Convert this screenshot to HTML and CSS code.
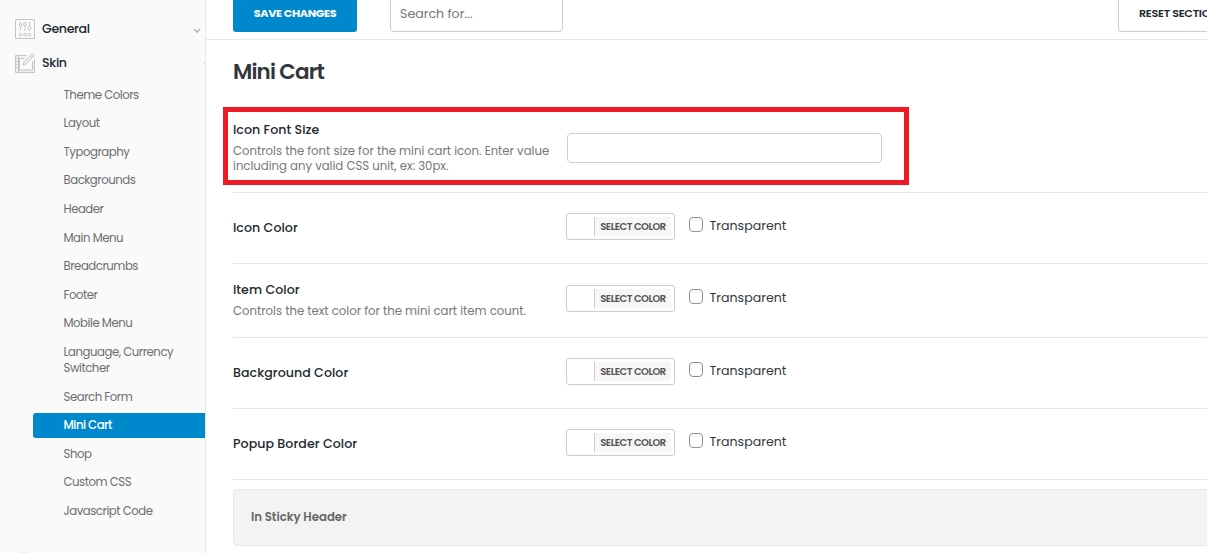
FILE: index.html
```html
<!DOCTYPE html>
<html lang="en">
<head>
<meta charset="utf-8">
<title>Theme Options</title>
<link rel="stylesheet" href="styles.css">
</head>
<body>
<div class="app">
  <aside class="sidebar">
    <div class="group general">
      <svg class="group-icon" width="20" height="20" viewBox="0 0 20 20"><rect x=".5" y=".5" width="19" height="19" rx=".5"/><path d="M5.500 3v1.500M5.500 8v3.500M10 3v1M10 7v5M14.500 3v5M14.500 11v1"/><circle cx="5.500" cy="6.200" r="1.500"/><circle cx="10" cy="5.200" r="1.500"/><circle cx="14.500" cy="9" r="1.500"/><circle cx="5.500" cy="15.700" r="1.400"/><circle cx="10" cy="15.700" r="1.400"/><circle cx="14.500" cy="15.700" r="1.400"/></svg>
      <span class="group-name">General</span>
      <svg class="chevron" width="8" height="6" viewBox="0 0 8 6"><path d="M1 1l3 3 3-3"/></svg>
    </div>
    <div class="group skin">
      <svg class="group-icon" width="20" height="20" viewBox="0 0 20 20"><path class="tint" d="M.5 2.500h11l-2 2h-5v12.500h13v-9l2-2v13.500H.5z"/><path d="M11.500 2.500H.5v17h19V6M3.500 3v16M1 5.500h1.500M1 8.500h1.500M1 11.500h1.500M1 14.500h1.500M9.500 5.500H4.500v11.500h13V8.500"/><path class="pencil" d="M8 12l1-3.200L17.300.5l2 2L11 10.800zM15.300 2.500l2 2"/></svg>
      <span class="group-name">Skin</span>
      <i class="edge-dot"></i>
    </div>
    <ul class="menu">
      <li>Theme Colors</li>
      <li>Layout</li>
      <li>Typography</li>
      <li>Backgrounds</li>
      <li>Header</li>
      <li>Main Menu</li>
      <li>Breadcrumbs</li>
      <li>Footer</li>
      <li>Mobile Menu</li>
      <li>Language, Currency<br>Switcher</li>
      <li>Search Form</li>
      <li class="active">Mini Cart</li>
      <li>Shop</li>
      <li>Custom CSS</li>
      <li>Javascript Code</li>
    </ul>
    <i class="next-icon"></i>
  </aside>
  <main class="main">
    <header class="toolbar">
      <button class="save">SAVE CHANGES</button>
      <input class="search" type="text" placeholder="Search for...">
      <button class="reset">RESET SECTION</button>
    </header>
    <section class="panel">
      <h2>Mini Cart</h2>
      <div class="row row-size">
        <div class="label"><h3>Icon Font Size</h3><p>Controls the font size for the mini cart icon. Enter value<br>including any valid CSS unit, ex: 30px.</p></div>
        <input class="size-input" type="text">
        <div class="highlight"></div>
      </div>
      <div class="row row-color">
        <div class="label"><h3>Icon Color</h3></div>
        <div class="field"><button class="picker"><span>SELECT COLOR</span></button><label><i class="check"></i>Transparent</label></div>
      </div>
      <div class="row row-item">
        <div class="label"><h3>Item Color</h3><p>Controls the text color for the mini cart item count.</p></div>
        <div class="field"><button class="picker"><span>SELECT COLOR</span></button><label><i class="check"></i>Transparent</label></div>
      </div>
      <div class="row row-color">
        <div class="label"><h3>Background Color</h3></div>
        <div class="field"><button class="picker"><span>SELECT COLOR</span></button><label><i class="check"></i>Transparent</label></div>
      </div>
      <div class="row row-color">
        <div class="label"><h3>Popup Border Color</h3></div>
        <div class="field"><button class="picker"><span>SELECT COLOR</span></button><label><i class="check"></i>Transparent</label></div>
      </div>
      <div class="section-bar">In Sticky Header</div>
    </section>
  </main>
</div>
</body>
</html>
```

FILE: styles.css
```css
* { box-sizing: border-box; }
body { margin: 0; background: #fff; color: #23282d; font-family: Poppins, Inter, sans-serif; }
h2, h3, p, ul { margin: 0; padding: 0; }
button, input { font-family: inherit; margin: 0; }
.app { display: flex; width: 1207px; height: 553px; overflow: hidden; }
.sidebar { flex: none; display: flex; flex-direction: column; width: 206px; height: 553px; background: #fafafa; border-right: 1px solid #e7e7e7; }
.group { flex: none; display: flex; align-items: center; height: 34px; padding-left: 15px; }
.general { margin-top: 12px; }
.group-icon { overflow: visible; fill: none; stroke: #c4c4c4; stroke-width: 1; }
.group-icon .tint { fill: #efefef; stroke: none; }
.group-icon .pencil { fill: #f4f4f4; }
.group-name { margin-left: 7px; font-size: 12.600px; font-weight: 500; letter-spacing: -.35px; color: #23282d; }
.chevron { margin: 4px 4px 0 auto; fill: none; stroke: #b8bcc0; stroke-width: 1.700; }
.edge-dot { width: 1px; height: 1px; margin-left: auto; background: #e0c8a8; }
.menu { flex: none; margin-top: 2.100px; padding-left: 33px; list-style: none; font-size: 11.700px; line-height: 16px; letter-spacing: -.46px; color: #6d6d6d; }
.menu li { padding: 4.500px 0 4.500px 30.500px; margin-bottom: 3.600px; }
.menu .active { background: #0088cc; color: #fff; font-weight: 500; letter-spacing: -.5px; border-radius: 3px 0 0 3px; }
.next-icon { width: 4px; height: 2px; margin: auto 0 0 22px; background: #e6e6e6; border-radius: 2px 2px 0 0; }
.main { flex: 1; min-width: 0; }
.toolbar { display: flex; align-items: flex-end; height: 40px; padding: 0 0 7px 27px; border-bottom: 1px solid #e7e7e7; }
.save { flex: none; width: 124px; height: 38px; padding: 0; border: 0; border-radius: 3px; background: #0088cc; color: #fff; font-size: 11.200px; font-weight: 700; letter-spacing: -.35px; }
.search { flex: none; width: 173px; height: 38px; margin-left: 33px; padding: 2px 9px 0; border: 1px solid #ccc; border-radius: 4px; font-size: 12.600px; }
.search::placeholder { color: #757575; opacity: 1; }
.reset { flex: none; width: 130px; height: 38px; margin-left: 555px; padding: 0 0 0 20px; text-align: left; border: 1px solid #ccc; border-radius: 3px; background: #fff; color: #23282d; font-size: 11.200px; font-weight: 600; letter-spacing: -.3px; }
.panel { padding-left: 27px; }
h2 { height: 67px; padding-top: 16px; font-size: 21.500px; line-height: 32px; font-weight: 600; letter-spacing: -.85px; color: #32373c; }
h3 { font-size: 12.600px; line-height: 18px; font-weight: 500; letter-spacing: .05px; }
p { font-size: 11.700px; line-height: 15px; color: #777; }
.row { position: relative; display: flex; border-bottom: 1px solid #e7e7e7; }
.label { flex: none; width: 333px; white-space: nowrap; }
.row-size { height: 86px; padding-top: 13px; }
.row-size h3 { margin-top: 1px; }
.row-size p { margin-top: 5px; }
.size-input { width: 315px; height: 30px; margin: 13px 0 0 1px; border: 1px solid #ccc; border-radius: 4px; }
.highlight { position: absolute; left: -10px; top: 0; width: 686px; height: 78px; border: 5px solid #ed1c24; }
.row-color { height: 71px; }
.row-color h3 { padding-top: 26px; }
.row-color .field { padding-top: 20px; }
.row-item { height: 74px; }
.row-item h3 { margin-top: 17px; }
.row-item p { margin-top: 5px; }
.row-item .field { padding-top: 21px; }
.field { display: flex; align-items: flex-start; }
.picker { display: flex; justify-content: flex-end; width: 109px; height: 27px; padding: 3px; border: 1px solid #ccc; border-radius: 3px; background: #fff; }
.picker span { width: 77px; height: 19px; border-left: 1px solid #ccc; background: #f7f7f7; color: #555; font-size: 10px; line-height: 19px; font-weight: 600; letter-spacing: -.5px; text-align: center; }
.field label { display: flex; margin-left: 14px; font-size: 12.600px; line-height: 25px; color: #32373c; }
.check { width: 14px; height: 15px; margin: 4px 6.500px 0 0; border: 1px solid #8c8f94; border-radius: 4px; background: #fff; }
.section-bar { width: 1000px; height: 57px; margin-top: 9px; padding-left: 17px; border: 1px solid #e7e7e7; border-radius: 4px; background: #f3f3f3; color: #666; font-size: 11.700px; line-height: 55px; font-weight: 600; }
```
